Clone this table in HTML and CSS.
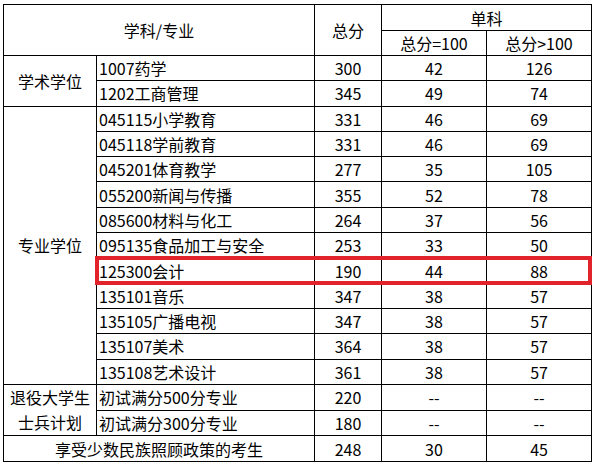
FILE: index.html
```html
<!DOCTYPE html>
<html lang="zh-CN">
<head>
<meta charset="utf-8">
<link rel="stylesheet" href="styles.css">
</head>
<body>
<div class="wrap">
<table class="score">
<colgroup>
<col class="c1"><col class="c2"><col class="c3"><col class="c4"><col class="c5">
</colgroup>
<thead>
<tr class="h1">
<th colspan="2" rowspan="2">学科/专业</th>
<th rowspan="2">总分</th>
<th colspan="2">单科</th>
</tr>
<tr class="h2">
<th>总分=100</th>
<th>总分&gt;100</th>
</tr>
</thead>
<tbody>
<tr><td rowspan="2" class="grp">学术学位</td><td class="name">1007药学</td><td>300</td><td>42</td><td>126</td></tr>
<tr><td class="name">1202工商管理</td><td>345</td><td>49</td><td>74</td></tr>
<tr><td rowspan="11" class="grp">专业学位</td><td class="name">045115小学教育</td><td>331</td><td>46</td><td>69</td></tr>
<tr><td class="name">045118学前教育</td><td>331</td><td>46</td><td>69</td></tr>
<tr><td class="name">045201体育教学</td><td>277</td><td>35</td><td>105</td></tr>
<tr><td class="name">055200新闻与传播</td><td>355</td><td>52</td><td>78</td></tr>
<tr><td class="name">085600材料与化工</td><td>264</td><td>37</td><td>56</td></tr>
<tr><td class="name">095135食品加工与安全</td><td>253</td><td>33</td><td>50</td></tr>
<tr><td class="name">125300会计</td><td>190</td><td>44</td><td>88</td></tr>
<tr><td class="name">135101音乐</td><td>347</td><td>38</td><td>57</td></tr>
<tr><td class="name">135105广播电视</td><td>347</td><td>38</td><td>57</td></tr>
<tr><td class="name">135107美术</td><td>364</td><td>38</td><td>57</td></tr>
<tr><td class="name">135108艺术设计</td><td>361</td><td>38</td><td>57</td></tr>
<tr><td rowspan="2" class="grp two">退役大学生<br>士兵计划</td><td class="name">初试满分500分专业</td><td>220</td><td>--</td><td>--</td></tr>
<tr><td class="name">初试满分300分专业</td><td>180</td><td>--</td><td>--</td></tr>
<tr><td colspan="2">享受少数民族照顾政策的考生</td><td>248</td><td>30</td><td>45</td></tr>
</tbody>
</table>
<div class="highlight"></div>
</div>
</body>
</html>
```

FILE: styles.css
```css
html, body {
  margin: 0;
  padding: 0;
  background: #fff;
}
body {
  padding: 4px 0 0 3px;
  font-family: "Noto Sans CJK SC", "Noto Sans", sans-serif;
  font-size: 16px;
  color: #000;
}
.wrap {
  position: relative;
  width: 588px;
}
.score {
  border-collapse: collapse;
  table-layout: fixed;
  width: 588px;
}
.c1 { width: 93px; }
.c2 { width: 218px; }
.c3 { width: 67px; }
.c4 { width: 105px; }
.c5 { width: 105px; }
.score th,
.score td {
  border: 1px solid #000;
  padding: 0;
  font-weight: normal;
  text-align: center;
  vertical-align: middle;
  line-height: 20px;
  white-space: nowrap;
  overflow: hidden;
}
.score tr.h1 { height: 26px; }
.score tr.h2 { height: 25px; }
.score tbody tr { height: 25.3px; }
.score td.name {
  text-align: left;
  padding-left: 2px;
}
.score td.two {
  line-height: 25.3px;
}
.highlight {
  position: absolute;
  left: 92px;
  top: 252px;
  width: 489px;
  height: 21px;
  border: 4px solid #e3232b;
  pointer-events: none;
}
```
